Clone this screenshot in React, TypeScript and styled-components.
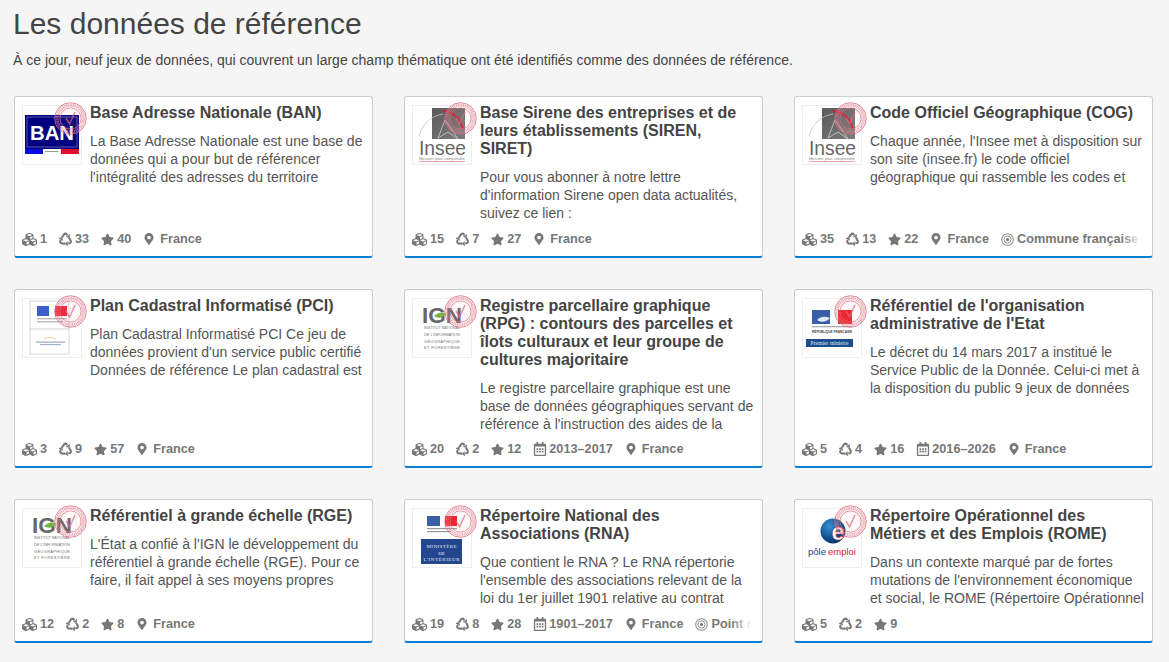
import React from "react";
import styled, { createGlobalStyle } from "styled-components";
import { FaCubes, FaStar, FaMapMarkerAlt, FaRegCalendarAlt } from "react-icons/fa";

const Global = createGlobalStyle`
  html, body { margin: 0; padding: 0; background: #f5f5f5; }
  body { font-family: "Liberation Sans", Arial, sans-serif; font-size: 14px; color: #444; overflow: hidden; }
`;
const Page = styled.main`
  width: 1169px;
  height: 662px;
  padding: 8px 16px 0 14px;
  box-sizing: border-box;
  overflow: hidden;
`;
const Title = styled.h1`
  margin: 0 0 0 -1px;
  font-size: 30px;
  line-height: 32px;
  font-weight: 400;
  color: #444;
`;
const Intro = styled.p`
  margin: 10px 0 0 -1px;
  font-size: 14px;
  line-height: 20px;
  color: #444;
`;
const Grid = styled.section`
  margin-top: 26px;
  display: grid;
  grid-template-columns: repeat(3, 359px);
  grid-template-rows: 162px 179px 144px;
  column-gap: 31px;
  row-gap: 31px;
`;
const Card = styled.article`
  position: relative;
  display: flex;
  flex-direction: column;
  box-sizing: border-box;
  background: #fff;
  border: 1px solid #ccc;
  border-bottom: 2px solid #0a7fd6;
  border-radius: 3px;
  padding: 7px 6px 0 7px;
`;
const Body = styled.div`
  display: flex;
  gap: 8px;
  flex: 1;
  min-height: 0;
`;
const LogoBox = styled.div`
  flex: none;
  width: 60px;
  height: 60px;
  margin-top: 1px;
  box-sizing: border-box;
  border: 1px solid #eee;
  background: #fff;
`;
const Stamp = styled.svg`
  position: absolute;
  left: 39px;
  top: 5px;
  width: 33px;
  height: 33px;
  pointer-events: none;
`;
const Text = styled.div`
  min-width: 0;
  flex: 1;
`;
const CardTitle = styled.h2`
  margin: 0 6px 10px 0;
  font-size: 16px;
  line-height: 18px;
  font-weight: 700;
  color: #444;
`;
const Desc = styled.p`
  margin: 0;
  height: 54px;
  overflow: hidden;
  font-size: 14px;
  line-height: 18px;
  color: #555;
`;
const Footer = styled.footer`
  position: relative;
  display: flex;
  align-items: center;
  flex: none;
  height: 18px;
  margin: 0 1px 8px 0;
  white-space: nowrap;
  overflow: hidden;
  color: #777;
  font-size: 12.7px;
  font-weight: 700;
  &::after {
    content: "";
    position: absolute;
    right: 0;
    top: 0;
    bottom: 0;
    width: 24px;
    background: linear-gradient(to right, rgba(255,255,255,0), #fff 85%);
  }
`;
const Stat = styled.span<{ $gap?: number }>`
  display: inline-flex;
  align-items: center;
  flex: none;
  gap: ${(p) => p.$gap ?? 3}px;
  margin-right: 12px;
  svg { flex: none; }
`;

const RecycleIcon = () => (
  <svg viewBox="0 0 14 14" width="13" height="14" fill="none" aria-hidden="true">
    {[0, 120, 240].map((a) => (
      <g key={a} transform={`rotate(${a} 7 7.6)`}>
        <path d="M3.2 5.4L5.4 2Q7 .4 8.4 2L9 3" stroke="currentColor" strokeWidth="2.2" />
        <path d="M7.2 4.9L11.3 5.6L12 1.6z" fill="currentColor" />
      </g>
    ))}
  </svg>
);
const TargetIcon = () => (
  <svg viewBox="0 0 13 13" width="13" height="13" fill="none" aria-hidden="true">
    <circle cx="6.5" cy="6.5" r="5.8" stroke="currentColor" strokeWidth="1.1" opacity=".8" />
    <circle cx="6.5" cy="6.5" r="3.6" stroke="currentColor" strokeWidth="1" opacity=".8" />
    <circle cx="6.5" cy="6.5" r="1.6" fill="currentColor" />
  </svg>
);

const StampMark = () => (
  <Stamp viewBox="0 0 33 33" fill="none" aria-hidden="true">
    <circle cx="16.5" cy="16.5" r="15.8" fill="rgba(240,170,180,.1)" stroke="#dd7080" strokeWidth="1" opacity=".8" />
    <circle cx="16.5" cy="16.5" r="13.3" stroke="#e07f8d" strokeWidth="3.2" strokeDasharray="1.1 .7" opacity=".6" />
    <circle cx="16.5" cy="16.5" r="10.6" stroke="#dd7080" strokeWidth=".9" opacity=".8" />
    <path d="M12 16l3.6 6 5.4-12" stroke="#dc6878" strokeWidth="1.5" opacity=".7" />
  </Stamp>
);

const BanLogo = () => (
  <svg viewBox="0 0 58 58" width="58" height="58">
    <rect x="2" y="9" width="54" height="39" fill="#fff" />
    <rect x="2" y="9" width="54" height="34" fill="#01017f" />
    <rect x="4" y="11" width="50" height="30" fill="none" stroke="#8f8fc8" strokeWidth=".6" />
    <text x="29" y="34" textAnchor="middle" fontFamily="Liberation Sans, sans-serif" fontSize="19.5" fontWeight="700" fill="#fff" textLength="44" lengthAdjust="spacingAndGlyphs">BAN</text>
    <rect x="2" y="43" width="18" height="5" fill="#0a0ae0" />
    <rect x="38" y="43" width="18" height="5" fill="#e0102a" />
    <rect x="22" y="45" width="13" height="1" fill="#999" />
  </svg>
);
const InseeLogo = () => (
  <svg viewBox="0 0 58 58" width="58" height="58">
    <defs>
      <linearGradient id="insee" x1="0" y1="0" x2="1" y2="1">
        <stop offset="0" stopColor="#5a5a5a" />
        <stop offset="1" stopColor="#7c7c7c" />
      </linearGradient>
    </defs>
    <rect x="19" y="2" width="33" height="31" fill="url(#insee)" />
    <path d="M6 30C10 17 18 10 30 8" fill="none" stroke="#c4c4c4" strokeWidth=".8" />
    <path d="M30 5c10 1 17 8 20 18" fill="none" stroke="#d81e3a" strokeWidth="2" />
    <path d="M25 32l7-18 13 19M25 32l10-6 10 7" fill="none" stroke="#ddd" strokeWidth=".7" />
    <text x="29.5" y="49" textAnchor="middle" fontFamily="Liberation Sans, sans-serif" fontSize="19.5" fill="#666" textLength="47" lengthAdjust="spacingAndGlyphs">Insee</text>
    <text x="29" y="54" textAnchor="middle" fontFamily="Liberation Sans, sans-serif" fontSize="4" fill="#888" textLength="46" lengthAdjust="spacingAndGlyphs">Mesurer pour comprendre</text>
    <rect x="6" y="55" width="46" height=".8" fill="#e58f9a" />
  </svg>
);
const GovLogo = () => (
  <svg viewBox="0 0 58 58" width="58" height="58">
    <rect x="7" y="2" width="39" height="53" fill="#fff" stroke="#ccc" strokeWidth=".8" />
    <line x1="7" y1="30" x2="46" y2="30" stroke="#ccc" strokeWidth=".8" />
    <rect x="14" y="7" width="12" height="10" fill="#3a5fc8" />
    <rect x="32" y="7" width="12" height="10" fill="#ee2030" />
    <rect x="14" y="19" width="30" height="1.4" fill="#bbb" />
    <rect x="14" y="22" width="26" height="1.4" fill="#bbb" />
    <path d="M21 40c4-2 8-2 12 0" stroke="#eec070" fill="none" strokeWidth=".8" />
    <rect x="13" y="42.5" width="29" height="1.3" fill="#a0b4cc" />
    <rect x="17" y="45" width="21" height="1.2" fill="#a0b4cc" />
  </svg>
);
const IgnLogo = () => (
  <svg viewBox="0 0 58 58" width="58" height="58">
    <text x="9" y="24" fontFamily="Liberation Sans, sans-serif" fontSize="22" fontWeight="700" fill="#666" textLength="40" lengthAdjust="spacingAndGlyphs">IGN</text>
    <path d="M21 17c4-4 9-4 12-3-2 5-8 6-12 3z" fill="#74b340" />
    <text x="11" y="30" fontFamily="Liberation Sans, sans-serif" fontSize="4" fill="#777" textLength="36" lengthAdjust="spacingAndGlyphs">INSTITUT NATIONAL</text>
    <text x="11" y="37" fontFamily="Liberation Sans, sans-serif" fontSize="4" fill="#777" textLength="36">DE L'INFORMATION</text>
    <text x="11" y="44" fontFamily="Liberation Sans, sans-serif" fontSize="4" fill="#777" textLength="36">GÉOGRAPHIQUE</text>
    <text x="11" y="50" fontFamily="Liberation Sans, sans-serif" fontSize="4" fill="#777" textLength="36">ET FORESTIÈRE</text>
  </svg>
);
const PremierLogo = () => (
  <svg viewBox="0 0 58 58" width="58" height="58">
    <rect x="9" y="11" width="18" height="14" fill="#3a5ea8" />
    <rect x="35" y="11" width="14" height="14" fill="#ee1c25" />
    <path d="M14 21c4-4 8-4 13-2-3 4-9 5-13 2z" fill="#fff" opacity=".85" />
    <rect x="9" y="27" width="40" height="1.3" fill="#aaa" />
    <text x="29" y="34" textAnchor="middle" fontFamily="Liberation Sans, sans-serif" fontSize="4.4" fontWeight="700" fill="#444" textLength="40" lengthAdjust="spacingAndGlyphs">RÉPUBLIQUE FRANÇAISE</text>
    <rect x="3" y="40" width="47" height="8" fill="#1a4e8c" />
    <text x="26.5" y="46" textAnchor="middle" fontFamily="Liberation Serif, serif" fontSize="5.6" fill="#dfe8f4" textLength="38">Premier ministre</text>
  </svg>
);
const InterieurLogo = () => (
  <svg viewBox="0 0 58 58" width="58" height="58">
    <rect x="14" y="7" width="13" height="10" fill="#3a5ea8" />
    <rect x="32" y="7" width="12" height="10" fill="#ee1c25" />
    <rect x="14" y="19" width="30" height="1.2" fill="#999" />
    <rect x="14" y="22" width="24" height="1.2" fill="#999" />
    <rect x="8" y="30" width="41" height="25" fill="#23468f" />
    <text x="28.5" y="39" textAnchor="middle" fontFamily="Liberation Serif, serif" fontSize="5" fill="#e6ecf8" textLength="30">MINISTÈRE</text>
    <text x="28.5" y="45.5" textAnchor="middle" fontFamily="Liberation Serif, serif" fontSize="5" fill="#e6ecf8">DE</text>
    <text x="28.5" y="52" textAnchor="middle" fontFamily="Liberation Serif, serif" fontSize="5" fill="#e6ecf8" textLength="36">L'INTÉRIEUR</text>
  </svg>
);
const PoleEmploiLogo = () => (
  <svg viewBox="0 0 58 58" width="58" height="58">
    <defs>
      <radialGradient id="pe" cx=".35" cy=".3" r=".8">
        <stop offset="0" stopColor="#3a8fd0" />
        <stop offset=".6" stopColor="#0d4f8f" />
        <stop offset="1" stopColor="#062a55" />
      </radialGradient>
    </defs>
    <circle cx="30" cy="22" r="12.5" fill="url(#pe)" />
    <text x="35" y="31" textAnchor="middle" fontFamily="Liberation Sans, sans-serif" fontSize="23" fontWeight="700" fill="#fff" stroke="#e0223a" strokeWidth=".4">e</text>
    <text x="5" y="46" fontFamily="Liberation Sans, sans-serif" fontSize="9.5" fill="#1d3f78" textLength="18" lengthAdjust="spacingAndGlyphs">pôle</text>
    <text x="25" y="46" fontFamily="Liberation Sans, sans-serif" fontSize="9.5" fill="#e0223a" textLength="28" lengthAdjust="spacingAndGlyphs">emploi</text>
  </svg>
);

type Data = {
  title: string; desc: string; logo: React.ComponentType;
  res: number; re: number; fav: number; years?: string; place?: string; gran?: string;
};
const cards: Data[] = [
  { title: "Base Adresse Nationale (BAN)", desc: "La Base Adresse Nationale est une base de données qui a pour but de référencer l'intégralité des adresses du territoire", logo: BanLogo, res: 1, re: 33, fav: 40, place: "France" },
  { title: "Base Sirene des entreprises et de leurs établissements (SIREN, SIRET)", desc: "Pour vous abonner à notre lettre d'information Sirene open data actualités, suivez ce lien :", logo: InseeLogo, res: 15, re: 7, fav: 27, place: "France" },
  { title: "Code Officiel Géographique (COG)", desc: "Chaque année, l'Insee met à disposition sur son site (insee.fr) le code officiel géographique qui rassemble les codes et", logo: InseeLogo, res: 35, re: 13, fav: 22, place: "France", gran: "Commune française" },
  { title: "Plan Cadastral Informatisé (PCI)", desc: "Plan Cadastral Informatisé PCI Ce jeu de données provient d'un service public certifié Données de référence Le plan cadastral est", logo: GovLogo, res: 3, re: 9, fav: 57, place: "France" },
  { title: "Registre parcellaire graphique (RPG) : contours des parcelles et îlots culturaux et leur groupe de cultures majoritaire", desc: "Le registre parcellaire graphique est une base de données géographiques servant de référence à l'instruction des aides de la", logo: IgnLogo, res: 20, re: 2, fav: 12, years: "2013–2017", place: "France" },
  { title: "Référentiel de l'organisation administrative de l'Etat", desc: "Le décret du 14 mars 2017 a institué le Service Public de la Donnée. Celui-ci met à la disposition du public 9 jeux de données", logo: PremierLogo, res: 5, re: 4, fav: 16, years: "2016–2026", place: "France" },
  { title: "Référentiel à grande échelle (RGE)", desc: "L'État a confié à l'IGN le développement du référentiel à grande échelle (RGE). Pour ce faire, il fait appel à ses moyens propres", logo: IgnLogo, res: 12, re: 2, fav: 8, place: "France" },
  { title: "Répertoire National des Associations (RNA)", desc: "Que contient le RNA ? Le RNA répertorie l'ensemble des associations relevant de la loi du 1er juillet 1901 relative au contrat", logo: InterieurLogo, res: 19, re: 8, fav: 28, years: "1901–2017", place: "France", gran: "Point d'intérêt" },
  { title: "Répertoire Opérationnel des Métiers et des Emplois (ROME)", desc: "Dans un contexte marqué par de fortes mutations de l'environnement économique et social, le ROME (Répertoire Opérationnel", logo: PoleEmploiLogo, res: 5, re: 2, fav: 9 },
];

export default function App() {
  return (
    <Page>
      <Global />
      <Title>Les données de référence</Title>
      <Intro>À ce jour, neuf jeux de données, qui couvrent un large champ thématique ont été identifiés comme des données de référence.</Intro>
      <Grid>
        {cards.map((c) => (
          <Card key={c.title}>
            <Body>
              <LogoBox><c.logo /></LogoBox>
              <Text>
                <CardTitle>{c.title}</CardTitle>
                <Desc>{c.desc}</Desc>
              </Text>
            </Body>
            <StampMark />
            <Footer>
              <Stat><FaCubes size={15} />{c.res}</Stat>
              <Stat><RecycleIcon />{c.re}</Stat>
              <Stat><FaStar size={13} />{c.fav}</Stat>
              {c.years && <Stat $gap={2}><FaRegCalendarAlt size={14} />{c.years}</Stat>}
              {c.place && <Stat $gap={5}><FaMapMarkerAlt size={12} />{c.place}</Stat>}
              {c.gran && <Stat><TargetIcon />{c.gran}</Stat>}
            </Footer>
          </Card>
        ))}
      </Grid>
    </Page>
  );
}
